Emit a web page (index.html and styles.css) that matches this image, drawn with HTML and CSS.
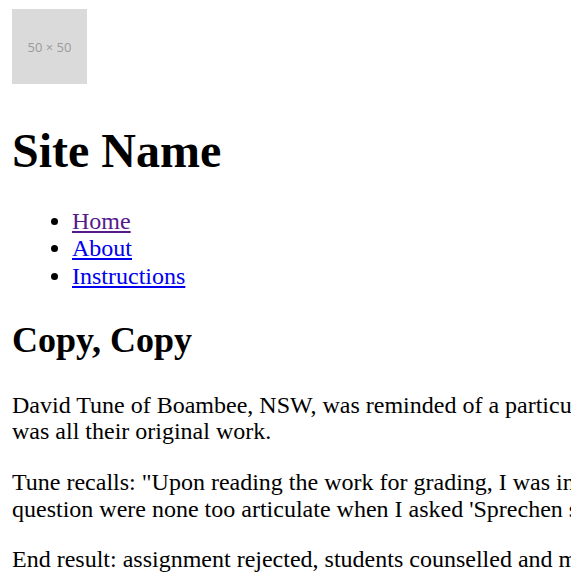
FILE: index.html
```html
<!DOCTYPE html>
<html>
<head>
<meta charset="utf-8">
<link rel="stylesheet" href="styles.css">
</head>
<body>
<header class="site-header">
  <div class="logo"><span class="placeholder">50 × 50</span></div>
  <h1 class="site-name">Site Name</h1>
  <ul class="nav">
    <li><a class="visited" href="#">Home</a></li>
    <li><a href="#about">About</a></li>
    <li><a href="#instructions">Instructions</a></li>
  </ul>
</header>
<main class="content">
  <h2 class="title">Copy, Copy</h2>
  <p>David Tune of Boambee, NSW, was reminded of a particular assignment where his students insisted it<br>was all their original work.</p>
  <p>Tune recalls: "Upon reading the work for grading, I was incredulous to find that the students in<br>question were none too articulate when I asked 'Sprechen sie Deutsch?'"</p>
  <p>End result: assignment rejected, students counselled and moved on.</p>
</main>
</body>
</html>
```
FILE: styles.css
```css
html {
  font-size: 24px;
  overflow: hidden;
}
body {
  margin: 9px 12px 12px;
  font-family: "Liberation Serif", "Times New Roman", serif;
  font-size: 24px;
  color: #000;
  background: #fff;
}
.logo {
  display: flex;
}
.placeholder {
  display: flex;
  align-items: center;
  justify-content: center;
  width: 75px;
  height: 75px;
  background: #dadada;
  color: #9a9a9a;
  font-family: "Open Sans", "Liberation Sans", sans-serif;
  font-size: 13px;
  padding-top: 1px;
  box-sizing: border-box;
}
.site-name {
  font-size: 48px;
  line-height: 55px;
  margin: 39px 0 30px;
}
.nav {
  margin: 30px 0;
  padding-left: 60px;
  line-height: 27.25px;
}
.nav a {
  color: #0000ee;
}
.nav a.visited {
  color: #551a8b;
}
.title {
  font-size: 36px;
  line-height: 41px;
  margin: 30px 0 31px;
}
.content {
  margin-right: -12px;
}
.content p {
  margin: 24px 0;
  line-height: 26.6px;
  white-space: nowrap;
  overflow: hidden;
}
```
